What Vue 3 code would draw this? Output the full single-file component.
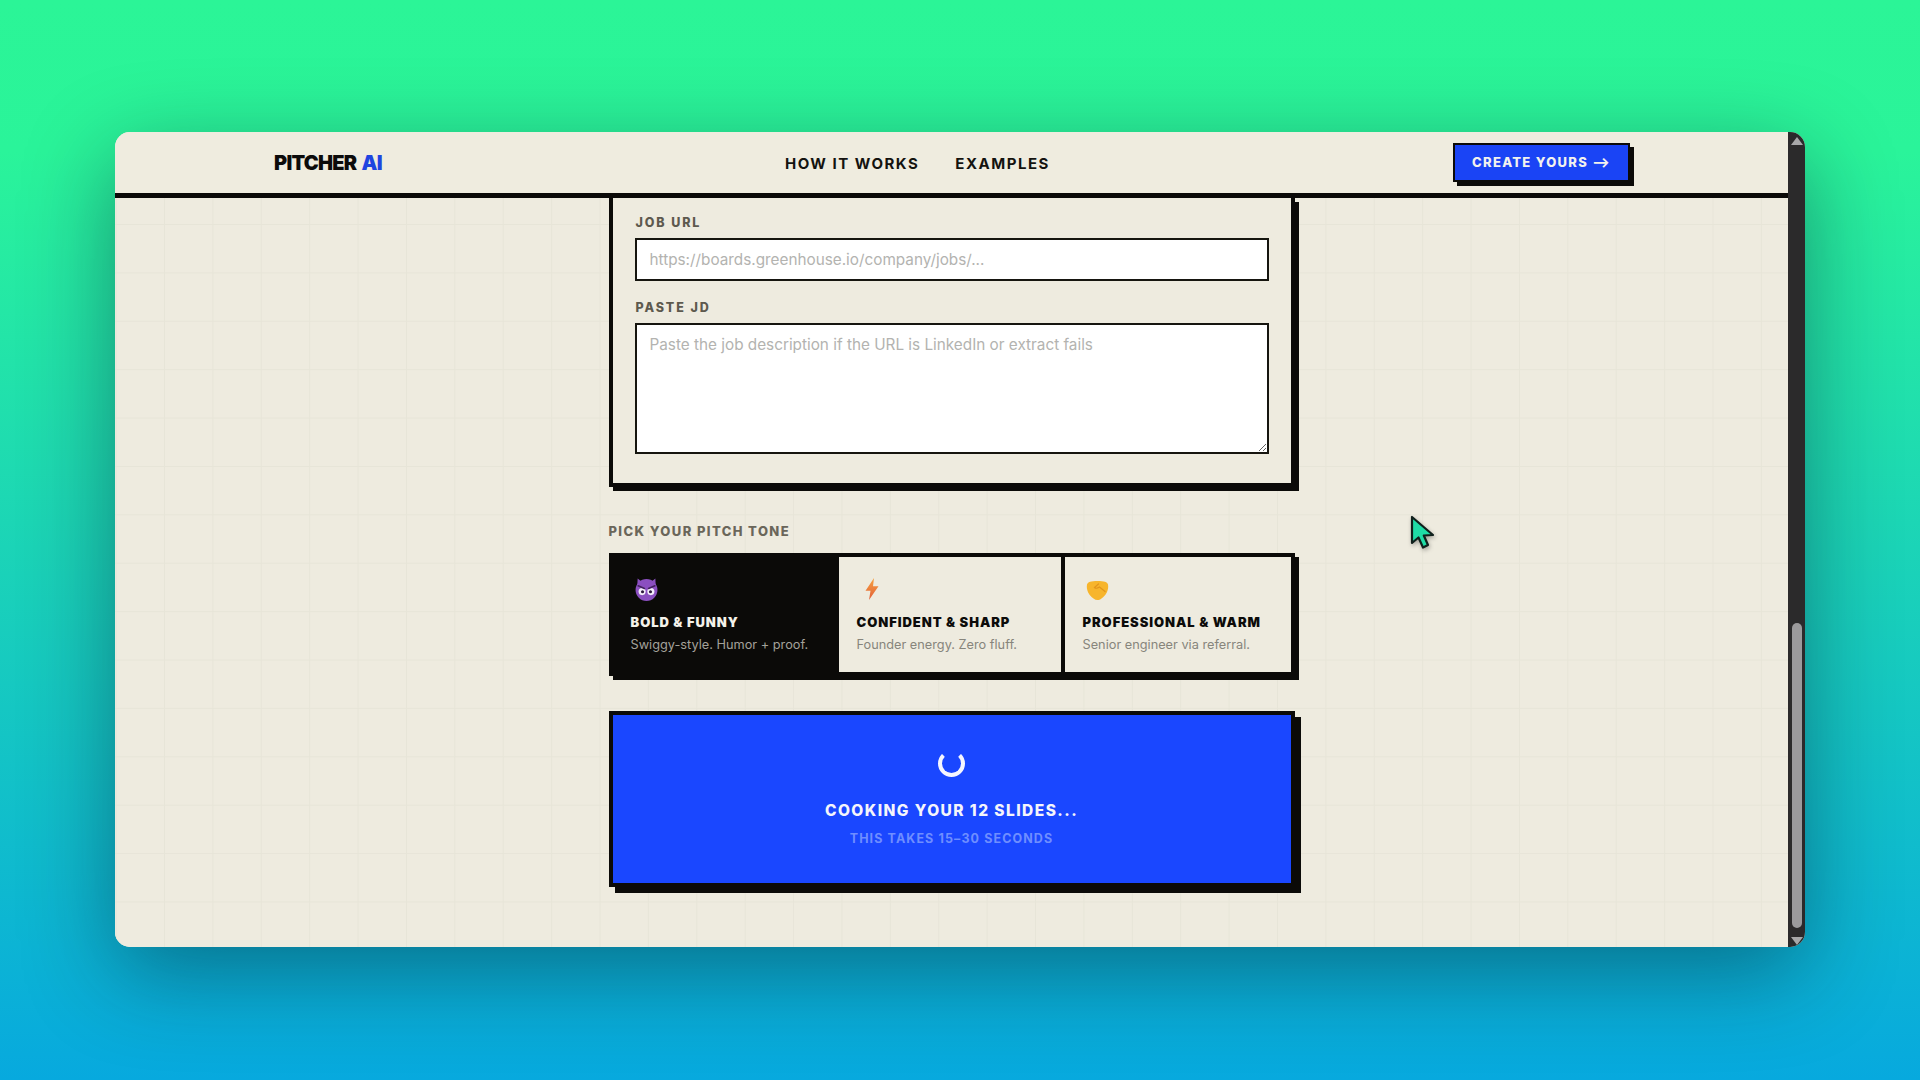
<script setup>
const tones = [
  { id: 'bold', title: 'BOLD & FUNNY', desc: 'Swiggy-style. Humor + proof.' },
  { id: 'sharp', title: 'CONFIDENT & SHARP', desc: 'Founder energy. Zero fluff.' },
  { id: 'warm', title: 'PROFESSIONAL & WARM', desc: 'Senior engineer via referral.' }
]
</script>

<template>
  <div class="stage">
    <div class="window">
      <div class="main">
        <header class="topbar">
          <div class="logo">PITCHER <span>AI</span></div>
          <nav class="nav">
            <a>HOW IT WORKS</a>
            <a>EXAMPLES</a>
          </nav>
          <button class="cta">CREATE YOURS ⟶</button>
        </header>
        <div class="content">
          <div class="column">
            <section class="card">
              <label class="field-label">JOB URL</label>
              <input class="input" type="text" placeholder="https://boards.greenhouse.io/company/jobs/..." />
              <label class="field-label second">PASTE JD</label>
              <textarea class="textarea" placeholder="Paste the job description if the URL is LinkedIn or extract fails"></textarea>
            </section>

            <div class="tone-label">PICK YOUR PITCH TONE</div>
            <div class="tones">
              <div v-for="t in tones" :key="t.id" class="tone" :class="{ active: t.id === 'bold' }">
                <div class="tone-icon">
                  <svg v-if="t.id === 'bold'" width="25" height="25" viewBox="0 0 24 24">
                    <path d="M3.5 1.5 L8 5 H16 L20.500 1.500 L21 11 H3 Z" fill="#8b4fc0" />
                    <circle cx="12" cy="12.500" r="10.500" fill="#8b4fc0" />
                    <circle cx="7.800" cy="14" r="3.400" fill="#f4eefa" />
                    <circle cx="16.200" cy="14" r="3.400" fill="#f4eefa" />
                    <circle cx="8.200" cy="14.200" r="1.500" fill="#2c1a3d" />
                    <circle cx="15.800" cy="14.200" r="1.500" fill="#2c1a3d" />
                    <path d="M4 8.500 L10 11 M20 8.500 L14 11" stroke="#43225f" stroke-width="1.600" stroke-linecap="round" />
                  </svg>
                  <svg v-else-if="t.id === 'sharp'" class="bolt" width="14" height="22" viewBox="0 0 14 22">
                    <defs>
                      <linearGradient id="boltFill" x1="0" y1="0" x2="0" y2="1">
                        <stop offset="0" stop-color="#f6a13f" />
                        <stop offset="1" stop-color="#e2603a" />
                      </linearGradient>
                    </defs>
                    <path d="M9 0 L0.500 12.800 H5.500 L4 22 L13.500 8.200 H8 Z" fill="url(#boltFill)" />
                  </svg>
                  <svg v-else class="shake" width="23" height="21" viewBox="0 0 23 21">
                    <path d="M1 4.500 C1.500 2 5 1 11.500 1 C18 1 21.500 2 22 4.500 C23 10 20 15.500 15.500 18.500 C13 20.500 10 20.500 7.500 18.500 C3 15.500 0 10 1 4.500 Z" fill="#f7b52c" />
                    <path d="M12.500 4 L8.500 7.500 C10 9 12 8 13.500 7 L19 11.500" fill="none" stroke="#e2951c" stroke-width="1.200" stroke-linecap="round" />
                  </svg>
                </div>
                <div class="tone-title">{{ t.title }}</div>
                <div class="tone-desc">{{ t.desc }}</div>
              </div>
            </div>

            <div class="generate">
              <div class="spinner"></div>
              <div class="gen-title">COOKING YOUR 12 SLIDES...</div>
              <div class="gen-sub">THIS TAKES 15–30 SECONDS</div>
            </div>
          </div>
        </div>
      </div>

      <div class="scrollbar">
        <div class="arrow up"></div>
        <div class="spacer"></div>
        <div class="thumb"></div>
        <div class="arrow down"></div>
      </div>

      <svg class="pointer" width="26" height="35" viewBox="0 0 26 35">
        <path d="M2 2 L2 28 L8.500 22.500 L13 32.500 L18 30 L13.800 20.500 L23 20 Z" fill="#1fdca6" stroke="#10201c" stroke-width="2.200" stroke-linejoin="round" />
      </svg>
    </div>
  </div>
</template>

<style>
html, body { margin: 0; padding: 0; }
</style>

<style scoped>
.stage {
  box-sizing: border-box;
  width: 1920px;
  height: 1080px;
  padding: 132px 115px 133px;
  background: linear-gradient(180deg, #2bf597 0%, #2af49a 14%, #07a9de 100%);
  overflow: hidden;
  font-family: Inter, "Liberation Sans", sans-serif;
}
.window {
  position: relative;
  display: flex;
  width: 1690px;
  height: 815px;
  border-radius: 15px;
  overflow: hidden;
  background: #eeebdf;
  box-shadow: 0 26px 90px rgba(0, 20, 40, 0.42);
}
.main {
  flex: 1;
  min-width: 0;
  display: flex;
  flex-direction: column;
}
.topbar {
  box-sizing: border-box;
  flex: none;
  height: 66px;
  padding: 0 158px 0 159px;
  display: flex;
  align-items: center;
  justify-content: space-between;
  border-bottom: 5px solid #0b0a08;
  background: #efecdf;
}
.logo {
  font-size: 20px;
  font-weight: 900;
  letter-spacing: -0.75px;
  word-spacing: 2px;
  color: #0c0b0a;
}
.logo span { color: #1f45e0; }
.nav {
  display: flex;
  gap: 36px;
  padding-top: 1px;
  font-size: 15px;
  font-weight: 700;
  letter-spacing: 1.5px;
  color: #14130f;
}
.cta {
  box-sizing: border-box;
  width: 177px;
  height: 39px;
  margin-top: -1px;
  padding: 0;
  border: 2px solid #0b0a08;
  background: #1a44f5;
  box-shadow: 4px 4px 0 #0b0a08;
  color: #f2f2ee;
  font-family: inherit;
  font-size: 13px;
  font-weight: 800;
  letter-spacing: 1.3px;
}
.content {
  flex: 1;
  min-height: 0;
  overflow: hidden;
  background-color: #eeebdf;
  background-image:
    linear-gradient(#e7e5d8 1px, transparent 1px),
    linear-gradient(90deg, #e7e5d8 1px, transparent 1px);
  background-size: 48.4px 48.4px;
  background-position: 49px 26px;
}
.column {
  width: 686px;
  margin: 0 auto;
}
.card {
  box-sizing: border-box;
  padding: 17px 22px 29px;
  border: 4px solid #0b0a08;
  border-top: none;
  background: #eeebdf;
  box-shadow: 4px 4px 0 #0b0a08;
  display: flex;
  flex-direction: column;
}
.field-label {
  font-size: 12.5px;
  line-height: 16px;
  font-weight: 800;
  letter-spacing: 1.9px;
  color: #5d594e;
  margin-bottom: 7px;
  padding-left: 1px;
}
.field-label.second {
  margin-top: 19px;
  margin-bottom: 7px;
}
.input, .textarea {
  box-sizing: border-box;
  width: 100%;
  border: 2px solid #16150f;
  background: #fff;
  padding: 0 13px;
  font-family: inherit;
  font-size: 15.3px;
  color: #222;
  outline: none;
  border-radius: 0;
  display: block;
}
.input { height: 43px; }
.textarea {
  height: 131px;
  padding-top: 10px;
  line-height: 20px;
}
.input::placeholder, .textarea::placeholder { color: #b3b3b0; }
.tone-label {
  margin-top: 36px;
  margin-bottom: 14px;
  font-size: 13px;
  line-height: 16px;
  font-weight: 800;
  letter-spacing: 1.4px;
  color: #6a665a;
}
.tones {
  display: grid;
  grid-template-columns: repeat(3, 1fr);
  border: 4px solid #0b0a08;
  box-shadow: 4px 4px 0 #0b0a08;
  background: #eeebdf;
}
.tone {
  box-sizing: border-box;
  height: 115px;
  padding: 20px 18px 0;
  border-right: 4px solid #0b0a08;
  color: #0c0b0a;
}
.tone:last-child { border-right: none; }
.tone.active {
  background: #0b0a08;
  color: #f4f2ea;
}
.tone-icon {
  height: 26px;
  margin-bottom: 11px;
  display: flex;
  align-items: flex-start;
}
.tone-icon svg { display: block; margin-left: 3px; }
.tone-icon .bolt { margin-left: 8px; margin-top: 1px; }
.tone-icon .shake { margin-top: 3px; }
.tone-title {
  font-size: 13px;
  line-height: 16px;
  font-weight: 900;
  letter-spacing: 0.95px;
}
.tone-desc {
  margin-top: 7px;
  font-size: 12.75px;
  line-height: 16px;
  color: #87857c;
}
.tone.active .tone-desc { color: #a3a19a; }
.generate {
  box-sizing: border-box;
  height: 176px;
  margin-top: 35px;
  padding-top: 35px;
  border: 4px solid #0b0a08;
  background: #1a47ff;
  box-shadow: 6px 6px 0 #0b0a08;
  display: flex;
  flex-direction: column;
  align-items: center;
}
.spinner {
  box-sizing: border-box;
  width: 27px;
  height: 27px;
  border: 4px solid #f5f6ff;
  border-top-color: transparent;
  border-radius: 50%;
}
.gen-title {
  margin-top: 24px;
  font-size: 15.5px;
  line-height: 20px;
  font-weight: 800;
  letter-spacing: 1.45px;
  color: #f4f5fb;
}
.gen-sub {
  margin-top: 10px;
  font-size: 12.5px;
  line-height: 16px;
  font-weight: 700;
  letter-spacing: 1.1px;
  color: #6f8eff;
}
.scrollbar {
  flex: none;
  width: 17px;
  padding: 5px 0 2px;
  box-sizing: border-box;
  background: #2b2a2b;
  display: flex;
  flex-direction: column;
  align-items: center;
}
.spacer { flex: 1; }
.thumb {
  width: 10px;
  height: 305px;
  border-radius: 5px;
  background: #9b9a9c;
}
.arrow {
  width: 0;
  height: 0;
  border-left: 6px solid transparent;
  border-right: 6px solid transparent;
}
.arrow.up { border-bottom: 8px solid #a8a7a9; }
.arrow.down {
  margin-top: 9px;
  border-top: 8px solid #a8a7a9;
}
.pointer {
  position: absolute;
  left: 1295px;
  top: 383px;
  filter: drop-shadow(1px 2px 2px rgba(0, 0, 0, 0.3));
}
</style>
